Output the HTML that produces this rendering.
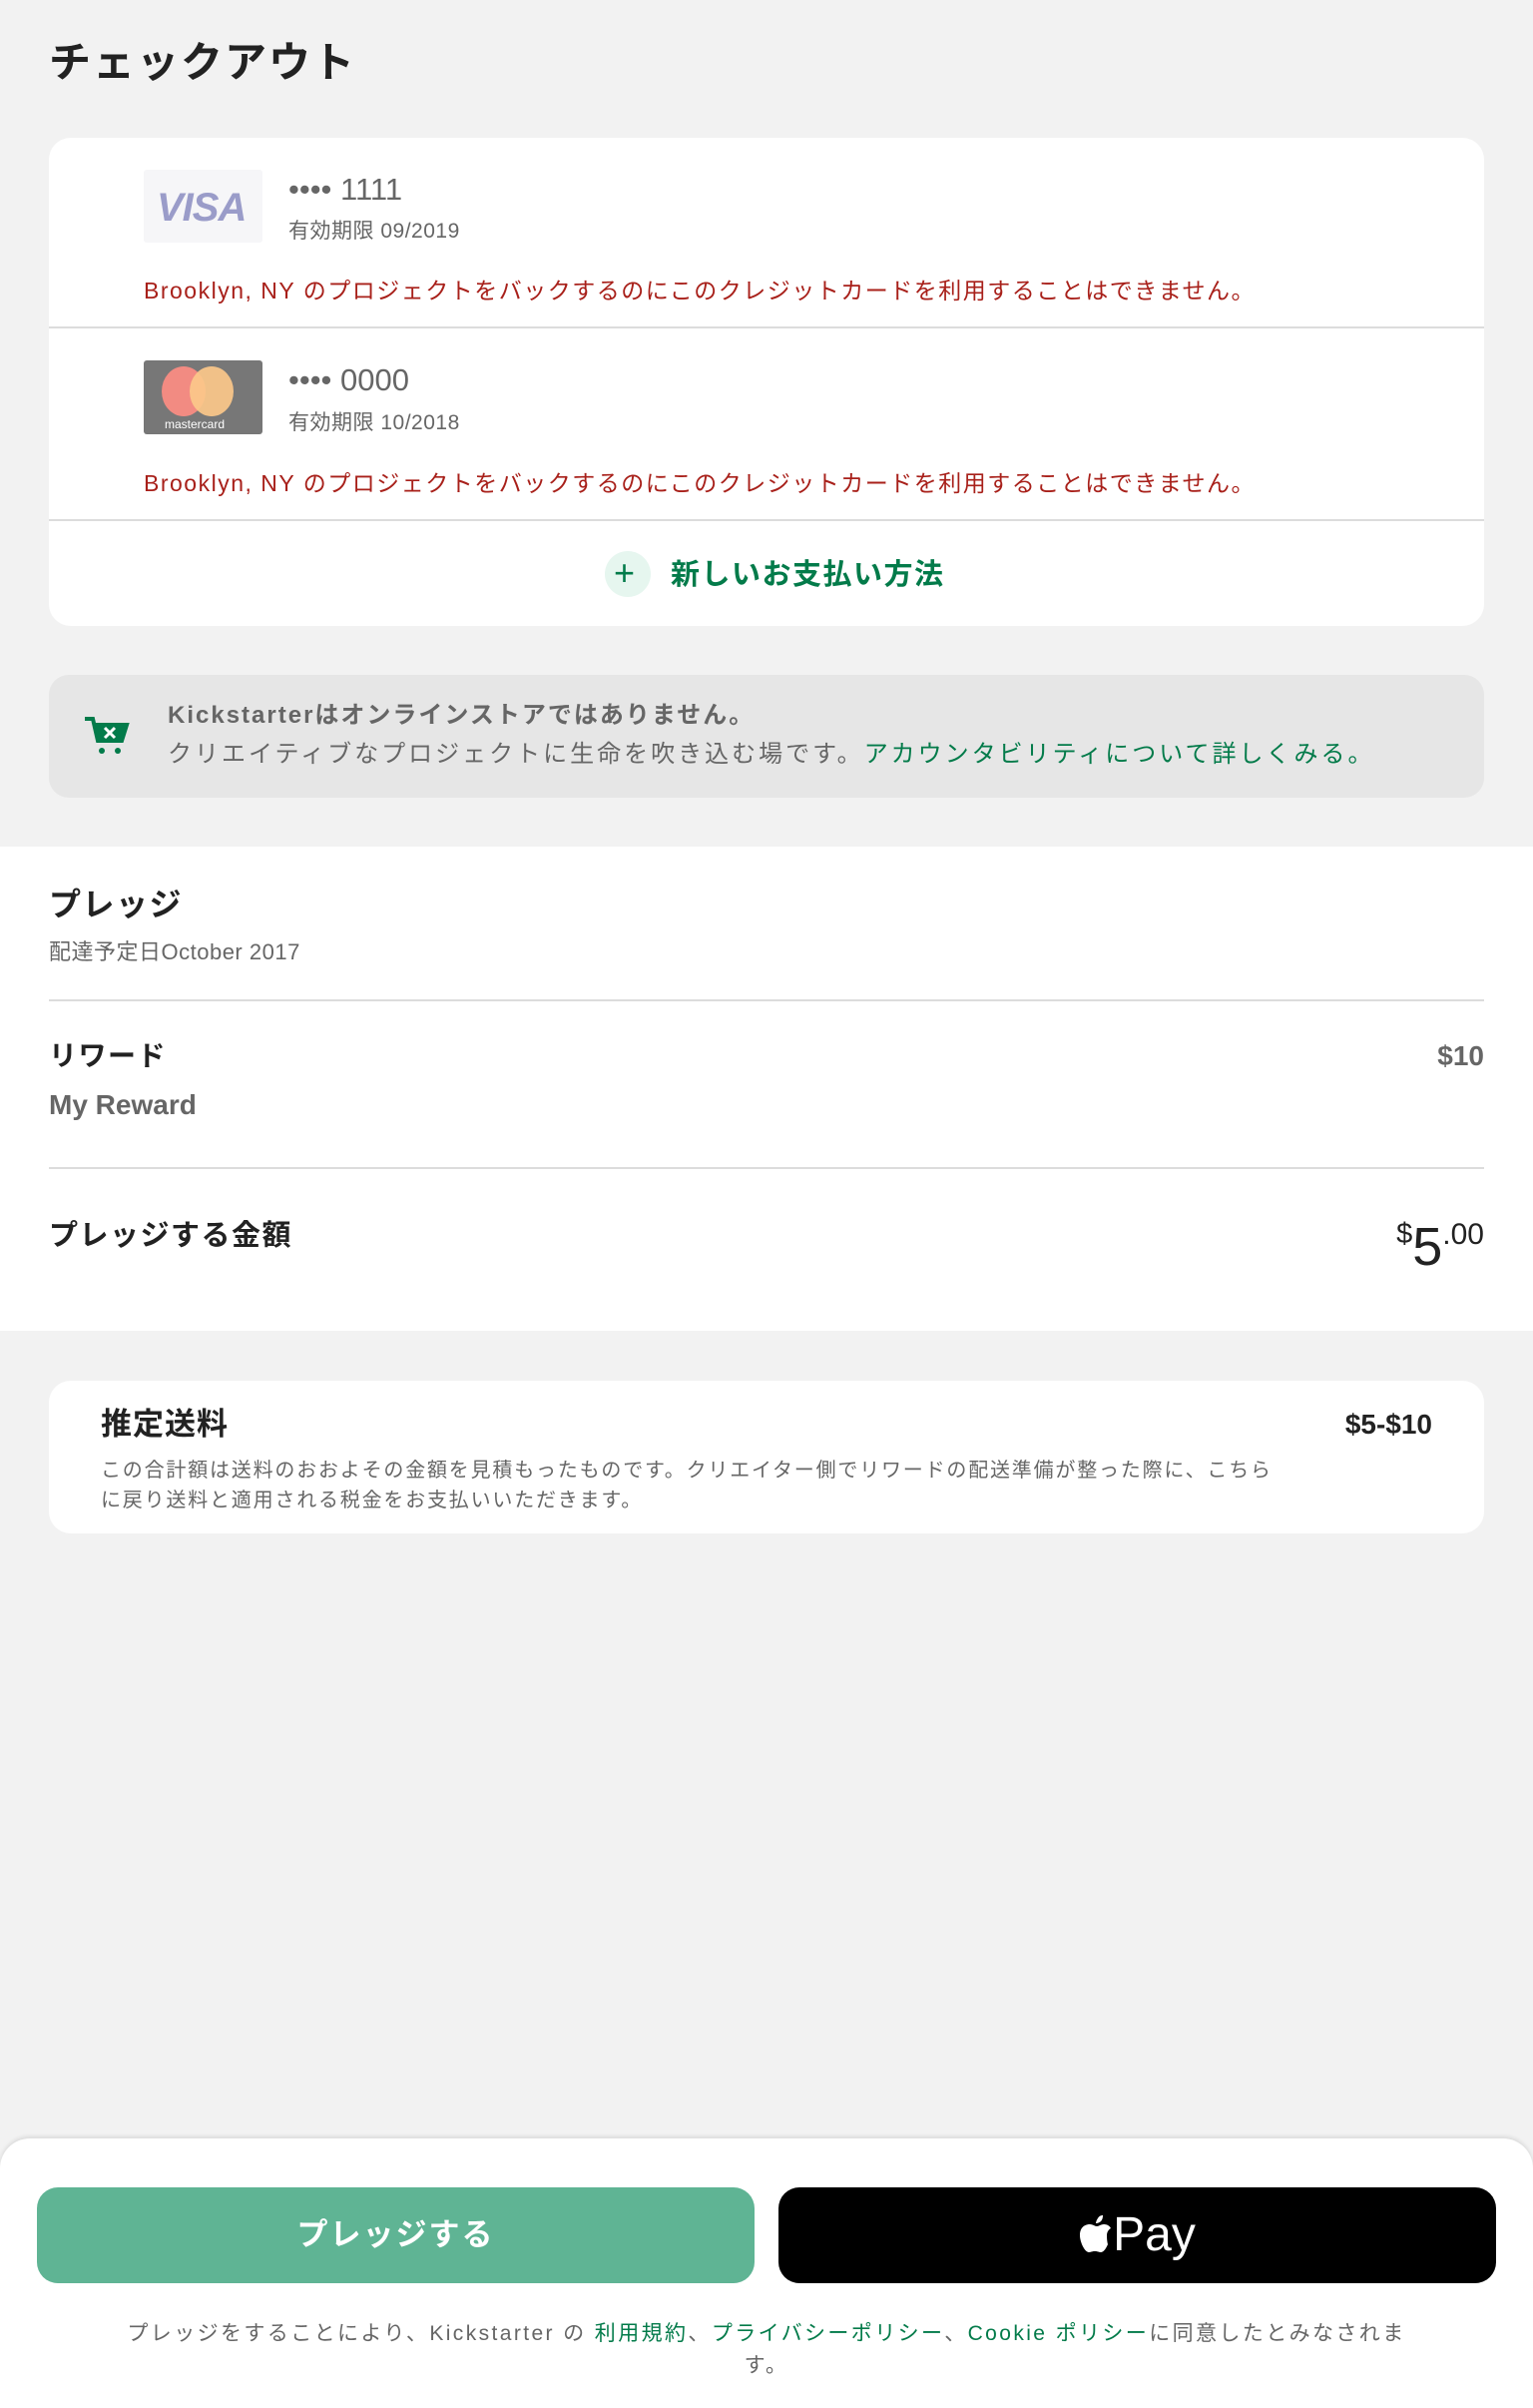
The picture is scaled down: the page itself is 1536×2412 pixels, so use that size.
<!DOCTYPE html>
<html><head><meta charset="utf-8"><style>
*{box-sizing:border-box;margin:0;padding:0}
body{width:1536px;height:2400px;background:#f2f2f2;font-family:"Liberation Sans","Noto Sans CJK JP",sans-serif;color:#222;position:relative;overflow:hidden}
.abs{position:absolute}
.card{position:absolute;left:49px;width:1438px;background:#fff;border-radius:22px}
.t{position:absolute;white-space:nowrap;line-height:1}
.err{color:#a8201a;font-size:23px;letter-spacing:1.5px}
.gray{color:#666}
.green{color:#037b4a}
.hr{position:absolute;height:2px;background:#dcdcdc}
</style></head><body>
<div class="t" style="left:49px;top:42px;font-size:42px;font-weight:bold;color:#222;letter-spacing:2px">チェックアウト</div>

<div class="card" style="top:138px;height:489px">
  <div class="abs" style="left:95px;top:32px;width:119px;height:73px;background:#f6f6f8;border-radius:3px"></div>
  <div class="t" style="left:108px;top:50px;font-size:40px;font-weight:bold;font-style:italic;color:#9a9cc9;letter-spacing:-1px">VISA</div>
  <div class="t gray" style="left:240px;top:36px;font-size:31px">•••• 1111</div>
  <div class="t gray" style="left:240px;top:83px;font-size:21px;letter-spacing:.5px">有効期限 09/2019</div>
  <div class="t err" style="left:95px;top:142px">Brooklyn, NY のプロジェクトをバックするのにこのクレジットカードを利用することはできません。</div>
  <div class="hr" style="left:0;right:0;top:189px"></div>
  <div class="abs" style="left:95px;top:223px;width:119px;height:74px;background:#777;border-radius:3px;overflow:hidden">
    <div class="abs" style="left:18px;top:6px;width:44px;height:50px;border-radius:50%;background:#f28b82"></div>
    <div class="abs" style="left:46px;top:6px;width:44px;height:50px;border-radius:50%;background:#fcc88a;opacity:.92"></div>
    <div class="t" style="left:21px;top:58px;font-size:12px;color:#fff">mastercard</div>
  </div>
  <div class="t gray" style="left:240px;top:227px;font-size:31px">•••• 0000</div>
  <div class="t gray" style="left:240px;top:275px;font-size:21px;letter-spacing:.5px">有効期限 10/2018</div>
  <div class="t err" style="left:95px;top:335px">Brooklyn, NY のプロジェクトをバックするのにこのクレジットカードを利用することはできません。</div>
  <div class="hr" style="left:0;right:0;top:382px"></div>
  <div class="abs" style="left:557px;top:414px;width:46px;height:46px;border-radius:50%;background:#e6f6ef"></div>
  <div class="t green" style="left:566px;top:418px;font-size:36px">+</div>
  <div class="t green" style="left:623px;top:424px;font-size:29px;font-weight:bold;letter-spacing:1.5px">新しいお支払い方法</div>
</div>

<div class="abs" style="left:49px;top:676px;width:1438px;height:123px;background:#e6e6e6;border-radius:20px">
  <svg class="abs" style="left:34px;top:40px" width="50" height="44" viewBox="0 0 50 44"><path d="M2 4h8l5 22h24l5-16H12" fill="none" stroke="#037b4a" stroke-width="4"/><path d="M12 10h32l-5 16H15z" fill="#037b4a"/><path d="M22 13l10 10M32 13L22 23" stroke="#fff" stroke-width="3"/><circle cx="19" cy="36" r="3" fill="#037b4a"/><circle cx="35" cy="36" r="3" fill="#037b4a"/></svg>
  <div class="t gray" style="left:119px;top:29px;font-size:24px;font-weight:bold;letter-spacing:2px">Kickstarterはオンラインストアではありません。</div>
  <div class="t gray" style="left:119px;top:68px;font-size:24px;letter-spacing:3px">クリエイティブなプロジェクトに生命を吹き込む場です。<span class="green">アカウンタビリティについて詳しくみる。</span></div>
</div>

<div class="abs" style="left:0;top:848px;width:1536px;height:485px;background:#fff">
  <div class="t" style="left:49px;top:42px;font-size:32px;font-weight:bold;letter-spacing:1.5px">プレッジ</div>
  <div class="t gray" style="left:49px;top:95px;font-size:22px;letter-spacing:.5px">配達予定日October 2017</div>
  <div class="hr" style="left:49px;width:1438px;top:153px"></div>
  <div class="t" style="left:49px;top:196px;font-size:28px;font-weight:bold;letter-spacing:1.5px">リワード</div>
  <div class="t gray" style="right:49px;top:196px;font-size:28px;font-weight:bold">$10</div>
  <div class="t gray" style="left:49px;top:245px;font-size:28px;font-weight:bold">My Reward</div>
  <div class="hr" style="left:49px;width:1438px;top:321px"></div>
  <div class="t" style="left:49px;top:376px;font-size:29px;font-weight:bold;letter-spacing:1.5px">プレッジする金額</div>
  <div class="t" style="right:49px;top:374px;color:#222"><span style="font-size:29px;vertical-align:top">$</span><span style="font-size:54px">5</span><span style="font-size:30px;vertical-align:top">.00</span></div>
</div>

<div class="card" style="top:1383px;height:153px">
  <div class="t" style="left:52px;top:28px;font-size:31px;font-weight:bold;letter-spacing:1px">推定送料</div>
  <div class="t" style="right:52px;top:30px;font-size:28px;font-weight:bold">$5-$10</div>
  <div class="abs gray" style="left:52px;top:75px;width:1300px;font-size:20px;line-height:30px;letter-spacing:1.8px;white-space:nowrap">この合計額は送料のおおよその金額を見積もったものです。クリエイター側でリワードの配送準備が整った際に、こちら<br>に戻り送料と適用される税金をお支払いいただきます。</div>
</div>

<div class="abs" style="left:0;top:2142px;width:1536px;height:270px;background:#fff;border-radius:30px 30px 0 0;box-shadow:0 -2px 4px rgba(0,0,0,.1)">
  <div class="abs" style="left:37px;top:49px;width:719px;height:96px;background:#5fb494;border-radius:21px;color:#fff;font-size:31px;font-weight:bold;text-align:center;line-height:96px;letter-spacing:2px">プレッジする</div>
  <div class="abs" style="left:780px;top:49px;width:719px;height:96px;background:#000;border-radius:21px;color:#fff;text-align:center;line-height:96px;font-size:48px">
    <svg width="34" height="40" viewBox="0 0 34 40" style="vertical-align:-4px"><path d="M28 21c0-5 4-7 4-7-2-4-6-4-7-4-3 0-5 2-7 2s-4-2-7-2C6 10 1 13 1 21c0 7 5 17 9 17 2 0 3-1 6-1s4 1 6 1c4 0 7-8 7-8s-1-3-1-9zM22 7c2-2 2-5 2-6-2 0-4 1-5 3-1 1-2 4-2 5 2 0 4-1 5-2z" fill="#fff"/></svg>Pay</div>
  <div class="abs gray" style="left:68px;top:180px;width:1400px;text-align:center;font-size:21px;line-height:32px;letter-spacing:2.4px;white-space:nowrap">プレッジをすることにより、Kickstarter の <span class="green">利用規約</span>、<span class="green">プライバシーポリシー</span>、<span class="green">Cookie ポリシー</span>に同意したとみなされま<br>す。</div>
</div>
</body></html>
